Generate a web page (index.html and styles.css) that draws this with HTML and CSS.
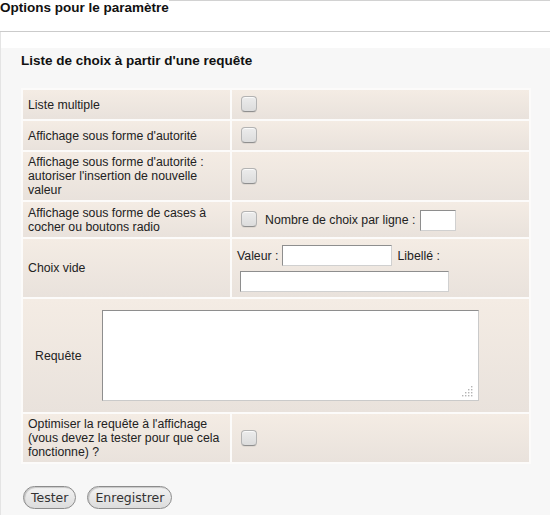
FILE: index.html
```html
<!DOCTYPE html>
<html lang="fr">
<head>
<meta charset="utf-8">
<title>Options pour le paramètre</title>
<link rel="stylesheet" href="styles.css">
</head>
<body>
<div class="header"><span class="title">Options pour le paramètre</span><span class="rule"></span></div>
<div class="body">
  <div class="gap"></div>
  <div class="panel">
    <h2 class="heading">Liste de choix à partir d'une requête</h2>
    <table class="opts">
      <colgroup><col class="c1"><col class="c2"></colgroup>
      <tr>
        <td class="lbl">Liste multiple</td>
        <td class="val"><input type="checkbox" class="cb"></td>
      </tr>
      <tr>
        <td class="lbl">Affichage sous forme d'autorité</td>
        <td class="val"><input type="checkbox" class="cb"></td>
      </tr>
      <tr>
        <td class="lbl">Affichage sous forme d'autorité : autoriser l'insertion de nouvelle valeur</td>
        <td class="val"><input type="checkbox" class="cb"></td>
      </tr>
      <tr>
        <td class="lbl">Affichage sous forme de cases à cocher ou boutons radio</td>
        <td class="val">
          <div class="inline">
            <input type="checkbox" class="cb cb-inline">
            <span>Nombre de choix par ligne :</span>
            <input type="text" class="txt small">
          </div>
        </td>
      </tr>
      <tr>
        <td class="lbl">Choix vide</td>
        <td class="val">
          <div class="stack">
            <div class="inline">
              <span class="lab">Valeur :</span>
              <input type="text" class="txt mid">
              <span>Libellé :</span>
            </div>
            <input type="text" class="txt wide">
          </div>
        </td>
      </tr>
      <tr>
        <td colspan="2" class="req">
          <div class="req-row">
            <div class="req-label">Requête</div>
            <div class="req-field">
              <div class="ta-wrap">
                <textarea class="ta"></textarea>
                <svg class="grip" width="11" height="11" viewBox="0 0 11 11">
                  <g fill="#b4b4b4">
                    <rect x="9" y="0" width="1.4" height="1.4"/>
                    <rect x="6" y="3" width="1.4" height="1.4"/><rect x="9" y="3" width="1.4" height="1.4"/>
                    <rect x="3" y="6" width="1.4" height="1.4"/><rect x="6" y="6" width="1.4" height="1.4"/><rect x="9" y="6" width="1.4" height="1.4"/>
                    <rect x="0" y="9" width="1.4" height="1.4"/><rect x="3" y="9" width="1.4" height="1.4"/><rect x="6" y="9" width="1.4" height="1.4"/><rect x="9" y="9" width="1.4" height="1.4"/>
                  </g>
                </svg>
              </div>
            </div>
          </div>
        </td>
      </tr>
      <tr>
        <td class="lbl">Optimiser la requête à l'affichage (vous devez la tester pour que cela fonctionne) ?</td>
        <td class="val"><input type="checkbox" class="cb"></td>
      </tr>
    </table>
    <div class="actions">
      <button type="button" class="btn">Tester</button>
      <button type="button" class="btn">Enregistrer</button>
    </div>
  </div>
</div>
</body>
</html>
```

FILE: styles.css
```css
html, body {
  margin: 0;
  padding: 0;
  background: #fff;
}

body {
  font-family: "Liberation Sans", Arial, sans-serif;
  color: #222;
}

.header {
  display: flex;
  align-items: flex-start;
  height: 32px;
  box-sizing: border-box;
  border-bottom: 1px solid #cbcbcb;
}

.title {
  font-weight: bold;
  font-size: 13.5px;
  line-height: 16px;
  color: #111;
  white-space: nowrap;
}

.rule {
  flex: 1;
  border-top: 1px solid #d2d2d2;
}

.body {
  border-left: 1px solid #e4e4e4;
}

.gap {
  height: 16px;
  background: #fff;
}

.panel {
  background: #f7f7f7;
  padding: 5px 0 20px 20px;
}

.heading {
  margin: 0 0 19px 0;
  font-size: 13.5px;
  line-height: 16px;
  font-weight: bold;
  color: #111;
}

.opts {
  width: 510px;
  table-layout: fixed;
  border-collapse: separate;
  border-spacing: 2px;
  background: #fcfbfa;
  font-size: 12.3px;
}

.c1 { width: 207px; }
.c2 { width: 297px; }

.opts td {
  background: linear-gradient(#f4ece4, #e9e2dc);
  vertical-align: middle;
  padding: 3px 5px;
}

.lbl {
  line-height: 14px;
}

.cb {
  -webkit-appearance: none;
  appearance: none;
  display: block;
  width: 16px;
  height: 16px;
  box-sizing: border-box;
  margin: 3px 0 4px 4px;
  border: 1px solid #b3b3b3;
  border-bottom-color: #8f8f8f;
  border-radius: 4px;
  background: linear-gradient(#ececec, #dcdcdc);
  box-shadow: inset 0 1px 0 #fafafa, 0 1px 0 rgba(0, 0, 0, 0.06);
}

.cb-inline {
  margin-right: 8px;
}

.inline {
  display: flex;
  align-items: center;
  white-space: nowrap;
}

.txt {
  box-sizing: border-box;
  height: 21px;
  border: 1px solid;
  border-color: #8e8e8e #d0d0d0 #d0d0d0 #8e8e8e;
  background: #fff;
  padding: 1px 3px;
  font: 12px "Liberation Sans", Arial, sans-serif;
}

.small {
  width: 36px;
  margin: 5px 0 3px 5px;
}

.stack {
  display: flex;
  flex-direction: column;
  align-items: flex-start;
  gap: 5px;
  padding: 3px 0 2px 0;
}

.lab {
  margin-right: 4px;
}

.mid {
  width: 110px;
  margin-right: 5px;
}

.wide {
  width: 209px;
  margin-left: 3px;
}

.opts td.req {
  padding: 0;
}

.req-row {
  display: flex;
  align-items: center;
}

.req-label {
  width: 56px;
  padding-left: 12px;
}

.req-field {
  padding: 11px 0 11px 11px;
}

.ta-wrap {
  position: relative;
  width: 377px;
  height: 91px;
}

.ta {
  display: block;
  box-sizing: border-box;
  width: 377px;
  height: 91px;
  margin: 0;
  border: 1px solid;
  border-color: #8e8e8e #cacaca #cacaca #8e8e8e;
  background: #fff;
  resize: none;
  font: 12px "Liberation Sans", Arial, sans-serif;
}

.grip {
  position: absolute;
  right: 6px;
  bottom: 4px;
}

.actions {
  display: flex;
  gap: 11px;
  margin-top: 22px;
  padding-left: 2px;
}

.btn {
  height: 23px;
  padding: 0 7px;
  border: 1px solid #8c8c8c;
  border-radius: 12px;
  background: linear-gradient(#f3f3f3, #dcdcdc);
  box-shadow: inset 1px 1px 1px rgba(0, 0, 0, 0.18);
  font-family: "DejaVu Sans", sans-serif;
  font-size: 12.5px;
  color: #333;
}
```
